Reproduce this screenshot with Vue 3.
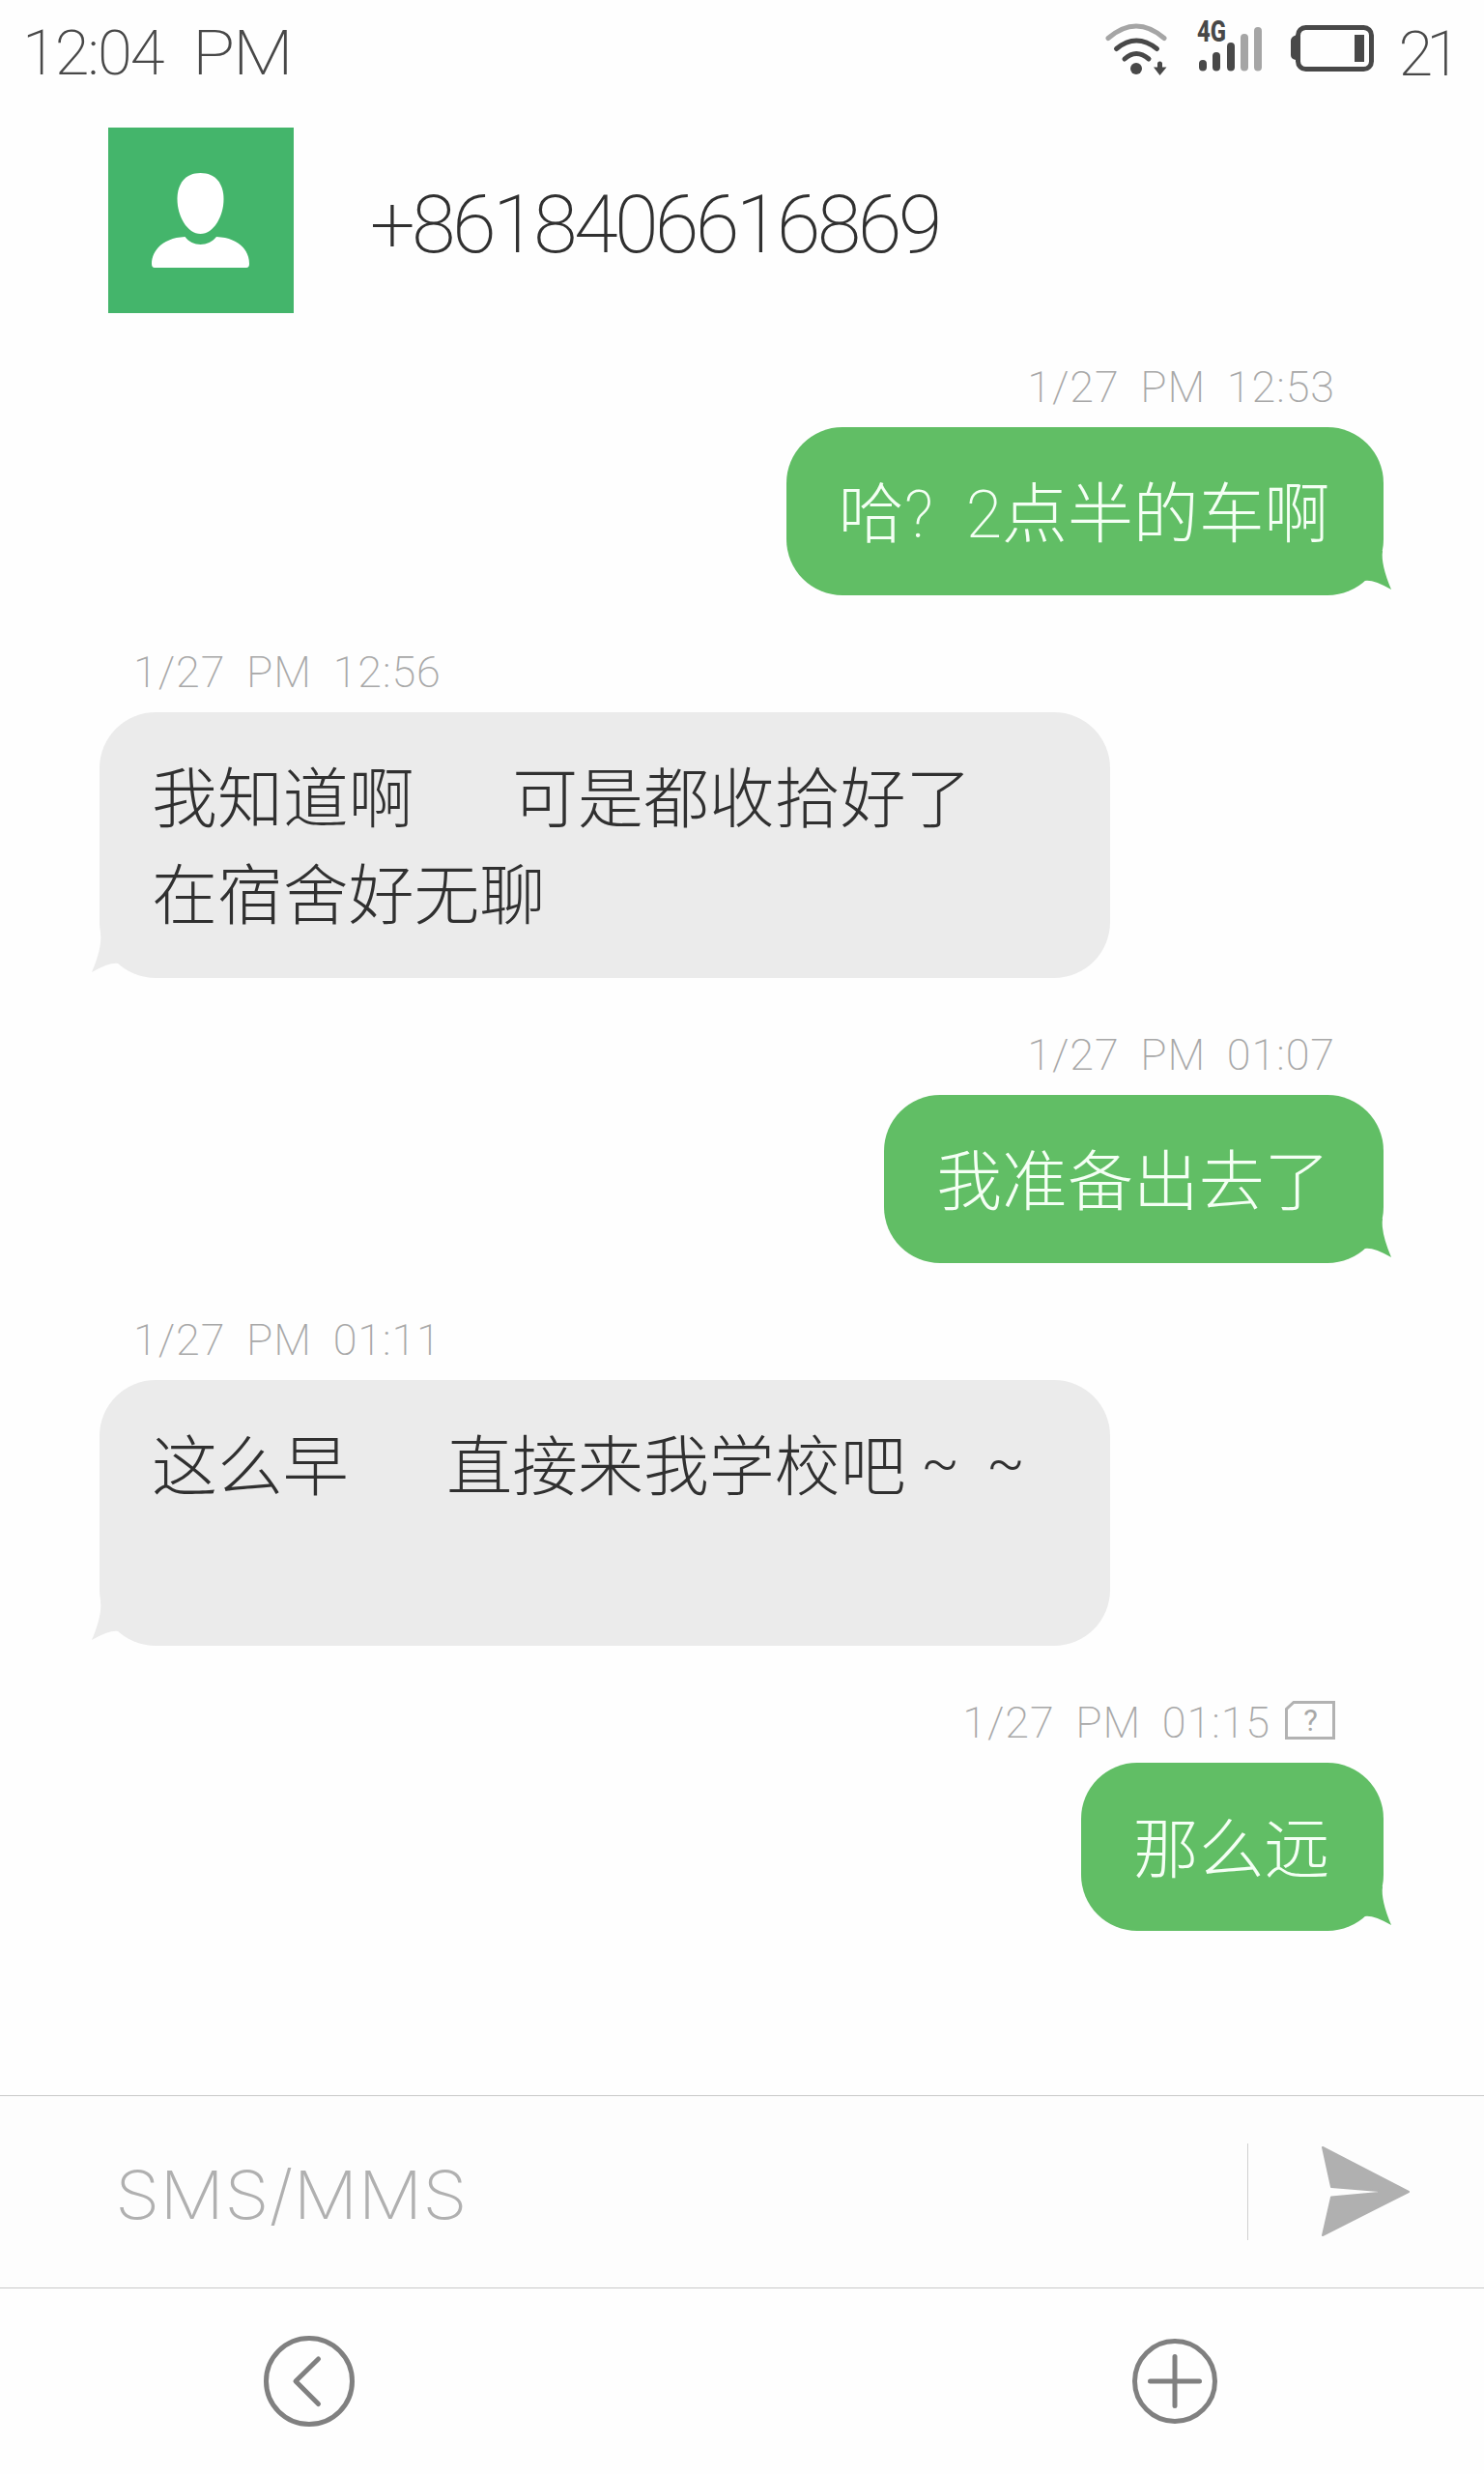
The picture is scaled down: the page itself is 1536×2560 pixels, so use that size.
<template>
  <div class="phone">
    <div class="status-bar">
      <span class="clock">12:04 <span class="meridiem">PM</span></span>
      <div class="status-icons">
        <svg class="wifi" width="66" height="56" viewBox="0 0 66 56" fill="none" stroke-width="5" stroke-linecap="round">
          <path d="M4 17.500Q33 -7.500 62 17.500" stroke="#a5a5a5" />
          <path d="M12.500 28.500Q33 11.500 54.500 28.500" stroke="#484848" />
          <path d="M21 39Q33 28 46 39" stroke="#484848" />
          <circle cx="33" cy="49" r="6" fill="#484848" />
          <path d="M57.500 44V48" stroke="#484848" />
          <path d="M51 47.500H64.500L57.500 56Z" fill="#484848" />
        </svg>
        <svg class="signal" width="74" height="74" viewBox="-2 -20 74 74" stroke-width="8" stroke-linecap="round">
          <text x="0" y="23" textLength="30" lengthAdjust="spacingAndGlyphs" fill="#484848">4G</text>
          <path d="M6 46V49.500M20 38V49.500M35 28V49.500" stroke="#484848" />
          <path d="M49 19V49.500M63 12V49.500" stroke="#a5a5a5" />
        </svg>
        <svg class="battery" width="88" height="50" viewBox="0 0 88 50">
          <rect x="7.500" y="3.500" width="76" height="43" rx="8" fill="none" stroke="#484848" stroke-width="5" />
          <path d="M8 11.500H5Q0 13 0 17V32Q0 36 5 37H8Z" fill="#484848" />
          <rect x="66" y="11" width="10" height="28" fill="#484848" />
        </svg>
        <span class="level">21</span>
      </div>
    </div>

    <div class="header">
      <div class="avatar">
        <svg width="102" height="98" viewBox="0 0 102 98" fill="#fff">
          <path d="M50.500 0C66 0 74.500 11 74.500 27C74.500 45 64 63 50.500 63C37 63 26.500 45 26.500 27C26.500 11 35 0 50.500 0Z" />
          <path d="M34.500 66C42 76.500 59 76.500 67 66C90 67 101 80 101 94Q101 98 98 98H3Q0 98 0 94C0 80 12 67 34.500 66Z" />
        </svg>
      </div>
      <span class="number">+8618406616869</span>
    </div>

    <div class="messages">
      <div v-for="(msg, index) in messages" :key="index" class="message" :class="msg.type">
        <div class="time">
          <span>{{ msg.time }}</span>
          <svg v-if="msg.sim" class="sim" width="52" height="40" viewBox="0 0 52 40">
            <path d="M9 1.500H50.500V38.500H1.500V8.500Z" fill="none" stroke="#b2b2b2" stroke-width="3" />
            <text x="26.500" y="31" text-anchor="middle" fill="#a8a8a8">?</text>
          </svg>
        </div>
        <div class="bubble">
          <template v-for="(part, i) in splitText(msg.text)" :key="i">
            <span v-if="part === '~'" class="tilde">~</span>
            <template v-else>{{ part }}</template>
          </template>
          <svg class="tail" width="34" height="44" viewBox="0 0 34 44">
            <path d="M0 0H24Q22 14 33 40Q14 29 5 31L0 34Z" />
          </svg>
        </div>
      </div>
    </div>

    <div class="composer">
      <span class="placeholder">SMS/MMS</span>
      <div class="send">
        <svg width="94" height="96" viewBox="0 0 94 96">
          <path d="M2 2L91 48L2 93L11 53.500L60 49V47L11 43Z" fill="#b0b0b0" stroke="#b0b0b0" stroke-width="2" stroke-linejoin="round" />
        </svg>
      </div>
    </div>

    <div class="nav">
      <svg width="96" height="96" viewBox="0 0 96 96" fill="none" stroke="#808080" stroke-width="5" stroke-linecap="round" stroke-linejoin="round">
        <circle cx="48" cy="48" r="44.500" />
        <path d="M57.500 25L34 48L57.500 71.500" />
      </svg>
      <svg width="90" height="90" viewBox="0 0 90 90" fill="none" stroke="#808080" stroke-width="5" stroke-linecap="round">
        <circle cx="45" cy="45" r="41.500" />
        <path d="M19.500 45H70.500M45 19.500V70.500" />
      </svg>
    </div>
  </div>
</template>

<script setup>
const messages = [
  { type: "sent", time: "1/27 PM 12:53", text: "哈? 2点半的车啊" },
  {
    type: "received",
    time: "1/27 PM 12:56",
    text: "我知道啊   可是都收拾好了\n在宿舍好无聊",
  },
  { type: "sent", time: "1/27 PM 01:07", text: "我准备出去了" },
  {
    type: "received",
    time: "1/27 PM 01:11",
    text: "这么早   直接来我学校吧~~",
  },
  { type: "sent", time: "1/27 PM 01:15", text: "那么远", sim: true },
];

// "~" takes a full character cell
function splitText(text) {
  return text.split(/(~)/).filter((part) => part);
}
</script>

<style>
body {
  background-color: #fefefe;
}
</style>

<style scoped>
.phone {
  display: flex;
  flex-direction: column;
  width: 1536px;
  height: 2560px;
  overflow: hidden;
  background-color: #fefefe;
  font-family: Roboto, "Noto Sans CJK SC", sans-serif;
  font-weight: 200;
  color: #303030;
}

.status-bar {
  display: flex;
  justify-content: space-between;
  height: 132px;
  padding: 0 31px 0 23px;
  box-sizing: border-box;
  font-size: 65px;
  line-height: 110px;
  color: #484848;
}

.clock {
  letter-spacing: -2px;
  word-spacing: 17px;
}

.meridiem {
  display: inline-block;
  transform: scaleX(1.12);
  transform-origin: left;
}

.status-icons {
  display: flex;
  align-items: flex-start;
}

.wifi {
  margin-top: 22px;
}

.signal {
  margin: 0 25px 0 28px;
}

.signal text {
  font-size: 31px;
  font-weight: 800;
}

.battery {
  margin: 25px 23px 0 0;
}

.level {
  line-height: 112px;
  letter-spacing: -7px;
}

.header {
  display: flex;
  align-items: center;
  height: 192px;
  padding-left: 112px;
}

.avatar {
  display: flex;
  align-items: center;
  justify-content: center;
  width: 192px;
  height: 192px;
  background-color: #44b56b;
}

.number {
  margin-left: 79px;
  padding-top: 8px;
  font-size: 83px;
  letter-spacing: -3.700px;
}

.messages {
  flex: 1;
  padding: 46px 104px 0 103px;
}

.message {
  display: flex;
  flex-direction: column;
  align-items: flex-start;
  margin-bottom: 49.300px;
}

.message.sent {
  align-items: flex-end;
}

.time {
  display: flex;
  align-items: center;
  height: 60px;
  margin: 0 50px 12px 35px;
  font-size: 45px;
  letter-spacing: 0.900px;
  word-spacing: 10px;
  color: #a8a8a8;
}

.sim {
  margin: -4px 0 0 15px;
}

.sim text {
  font-size: 31px;
  font-weight: 400;
  letter-spacing: 0;
}

.bubble {
  position: relative;
  padding: 41px 55.500px 33px 54px;
  border-radius: 58px;
  font-size: 67.900px;
  line-height: 100px;
  word-spacing: 17.500px;
  white-space: pre-wrap;
}

.sent .bubble {
  background-color: #61be65;
  color: #f4fff4;
}

.received .bubble {
  width: 1046px;
  height: 274.500px;
  box-sizing: border-box;
  background-color: #ebebeb;
}

.tilde {
  display: inline-block;
  width: 67.900px;
  height: 100px;
  padding-left: 3px;
  box-sizing: border-box;
  font-size: 58px;
  font-weight: 300;
  line-height: 88px;
  text-align: center;
  vertical-align: top;
}

.tail {
  position: absolute;
  right: -9px;
  bottom: 2px;
  fill: #61be65;
}

.received .tail {
  right: auto;
  left: -9px;
  fill: #ebebeb;
  transform: scaleX(-1);
}

.composer {
  display: flex;
  align-items: center;
  justify-content: space-between;
  height: 200px;
  box-sizing: border-box;
  border-top: 1.500px solid #c8c8c8;
  border-bottom: 1.500px solid #c8c8c8;
  background-color: #fdfdfd;
}

.placeholder {
  margin-left: 119px;
  padding-top: 6px;
  font-family: Inter, sans-serif;
  font-size: 69px;
  color: #b0b0b0;
  transform: scaleX(1.08);
  transform-origin: left;
}

.send {
  display: flex;
  align-items: center;
  width: 169px;
  height: 100px;
  padding-left: 75px;
  border-left: 1px solid #d0d0d0;
}

.nav {
  display: flex;
  align-items: center;
  justify-content: space-between;
  height: 192px;
  padding: 0 275px 0 272px;
}
</style>
